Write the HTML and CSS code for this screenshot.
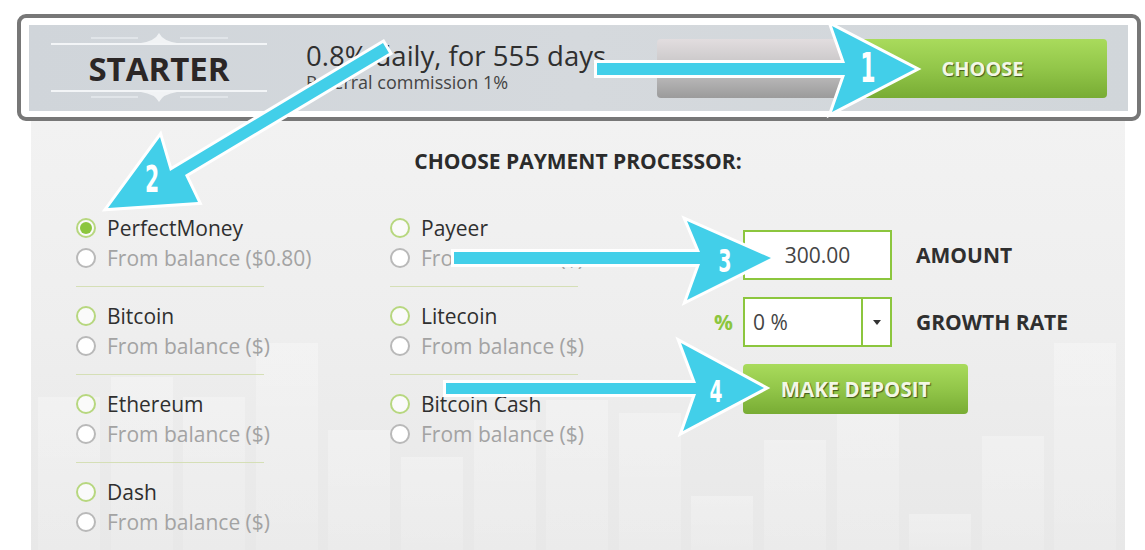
FILE: index.html
```html
<!DOCTYPE html>
<html lang="en">
<head>
<meta charset="utf-8">
<title>Starter plan deposit</title>
<link rel="stylesheet" href="styles.css">
</head>
<body>
<div class="page">
  <div class="highlight">
    <div class="plan-band">
      <div class="logo">
        <svg class="orn" width="216" height="12" viewBox="0 0 216 12">
          <line x1="40" y1="7" x2="87" y2="7" stroke="#e6eaee" stroke-width="1.5"/>
          <line x1="129" y1="7" x2="177" y2="7" stroke="#e6eaee" stroke-width="1.5"/>
          <path d="M90 12 Q104 10 108 2 Q112 10 126 12 Z" fill="#f1f3f5"/>
        </svg>
        <div class="logo-title">STARTER</div>
        <svg class="orn" width="216" height="12" viewBox="0 0 216 12">
          <line x1="40" y1="5" x2="87" y2="5" stroke="#e6eaee" stroke-width="1.5"/>
          <line x1="129" y1="5" x2="177" y2="5" stroke="#e6eaee" stroke-width="1.5"/>
          <path d="M90 0 Q104 2 108 10 Q112 2 126 0 Z" fill="#f1f3f5"/>
        </svg>
      </div>
      <div class="plan-info">
        <div class="plan-rate">0.8% daily, for 555 days</div>
        <div class="plan-ref">Referral commission 1%</div>
      </div>
      <div class="plan-actions">
        <div class="btn-gray"></div>
        <div class="btn-green btn-choose">CHOOSE</div>
      </div>
    </div>
  </div>

  <div class="panel">
    <div class="bars">
      <div class="bar" style="height:153px"></div>
      <div class="bar" style="height:173px"></div>
      <div class="bar" style="height:153px"></div>
      <div class="bar" style="height:207px"></div>
      <div class="bar" style="height:120px"></div>
      <div class="bar" style="height:93px"></div>
      <div class="bar" style="height:130px"></div>
      <div class="bar" style="height:150px"></div>
      <div class="bar" style="height:137px"></div>
      <div class="bar" style="height:54px"></div>
      <div class="bar" style="height:110px"></div>
      <div class="bar" style="height:150px"></div>
      <div class="bar" style="height:36px"></div>
      <div class="bar" style="height:114px"></div>
      <div class="bar" style="height:207px"></div>
    </div>

    <h2 class="panel-title">CHOOSE PAYMENT PROCESSOR:</h2>

    <div class="panel-body">
      <div class="proc-col">
        <div class="proc-group">
          <div class="opt"><span class="radio checked"></span><span class="opt-name">PerfectMoney</span></div>
          <div class="opt opt-bal"><span class="radio"></span><span>From balance ($0.80)</span></div>
        </div>
        <div class="proc-group">
          <div class="opt"><span class="radio"></span><span class="opt-name">Bitcoin</span></div>
          <div class="opt opt-bal"><span class="radio"></span><span>From balance ($)</span></div>
        </div>
        <div class="proc-group">
          <div class="opt"><span class="radio"></span><span class="opt-name">Ethereum</span></div>
          <div class="opt opt-bal"><span class="radio"></span><span>From balance ($)</span></div>
        </div>
        <div class="proc-group">
          <div class="opt"><span class="radio"></span><span class="opt-name">Dash</span></div>
          <div class="opt opt-bal"><span class="radio"></span><span>From balance ($)</span></div>
        </div>
      </div>

      <div class="proc-col proc-col-2">
        <div class="proc-group">
          <div class="opt"><span class="radio"></span><span class="opt-name">Payeer</span></div>
          <div class="opt opt-bal"><span class="radio"></span><span>From balance ($)</span></div>
        </div>
        <div class="proc-group">
          <div class="opt"><span class="radio"></span><span class="opt-name">Litecoin</span></div>
          <div class="opt opt-bal"><span class="radio"></span><span>From balance ($)</span></div>
        </div>
        <div class="proc-group">
          <div class="opt"><span class="radio"></span><span class="opt-name">Bitcoin Cash</span></div>
          <div class="opt opt-bal"><span class="radio"></span><span>From balance ($)</span></div>
        </div>
      </div>

      <div class="deposit-form">
        <div class="pct"></div>
        <div class="field field-amount">300.00</div>
        <div class="field-label">AMOUNT</div>

        <div class="pct">%</div>
        <div class="field field-select">
          <span class="select-value">0 %</span>
          <span class="select-caret"><svg width="8" height="5" viewBox="0 0 8 5"><path d="M0 0H8L4 5Z" fill="#333"/></svg></span>
        </div>
        <div class="field-label">GROWTH RATE</div>

        <div class="btn-green btn-deposit">MAKE DEPOSIT</div>
      </div>
    </div>
  </div>

  <svg class="annotations" width="1145" height="550" viewBox="0 0 1145 550">
    <g fill="#42cfe9" stroke="#ffffff" stroke-width="6" stroke-linejoin="miter" paint-order="stroke">
      <polygon points="597,63 845,63 832,26 915,69 832,112 845,75 597,75"/>
      <polygon points="383,43 170,171 160,137 108,208 198,202 185,175 389,53"/>
      <polygon points="454,252 700,252 687,221 771,258 687,300 700,264 454,264"/>
      <polygon points="446,383 696,383 681,343 764,388 683,431 696,394 446,394"/>
    </g>
    <g class="arrow-num" fill="#ffffff">
      <text x="868" y="82" transform="translate(868 0) scale(0.55 1) translate(-868 0)" font-size="40">1</text>
      <text x="152" y="192" transform="translate(152 0) scale(0.55 1) translate(-152 0)" font-size="37">2</text>
      <text x="725" y="272" transform="translate(725 0) scale(0.6 1) translate(-725 0)" font-size="32">3</text>
      <text x="716" y="402" transform="translate(716 0) scale(0.6 1) translate(-716 0)" font-size="31">4</text>
    </g>
  </svg>
</div>
</body>
</html>
```

FILE: styles.css
```css
* {
  box-sizing: border-box;
}

html, body {
  margin: 0;
  padding: 0;
  background: #ffffff;
  overflow: hidden;
}

body {
  font-family: "Open Sans", "Liberation Sans", sans-serif;
  color: #333333;
}

.page {
  position: relative;
  width: 1145px;
  height: 550px;
  overflow: hidden;
}

/* Plan header with its highlight frame */
.highlight {
  margin: 14px 0 0 17px;
  width: 1124px;
  border: 4px solid #777777;
  border-radius: 9px;
  padding: 7px 9px 6px 8px;
  background: #ffffff;
}

.plan-band {
  display: flex;
  align-items: center;
  height: 86px;
  padding: 0 21px 0 22px;
  background: linear-gradient(90deg, #d0d5da 0%, #d5d9dd 50%, #d1d6da 100%);
}

.logo {
  align-self: flex-start;
  margin-top: 6px;
  width: 216px;
  display: flex;
  flex-direction: column;
}

.orn {
  display: block;
}

.logo-title {
  border-top: 2px solid #f3f5f7;
  border-bottom: 2px solid #f3f5f7;
  padding-top: 2px;
  height: 49px;
  line-height: 43px;
  text-align: center;
  font-size: 33px;
  font-weight: 700;
  color: #2b2626;
}

.plan-info {
  flex: 1;
  align-self: flex-start;
  margin-top: 17px;
  padding-left: 39px;
}

.plan-rate {
  font-size: 27.5px;
  line-height: 28px;
  color: #2f2f2f;
}

.plan-ref {
  margin-top: 1px;
  font-size: 18px;
  line-height: 22px;
  color: #444444;
}

.plan-actions {
  display: flex;
  height: 59px;
}

.btn-gray {
  width: 201px;
  border-radius: 4px 0 0 4px;
  background: linear-gradient(#e2dddf 0%, #c8c6c7 45%, #9b9b9b 100%);
}

.btn-green {
  display: flex;
  align-items: center;
  justify-content: center;
  border-radius: 4px;
  background: linear-gradient(#a9db5c 0%, #92c649 50%, #78ac34 100%);
  color: #f3f7e6;
  font-weight: 700;
  text-shadow: 1px 1px 1px rgba(40, 55, 15, 0.75);
}

.btn-choose {
  width: 249px;
  border-radius: 0 4px 4px 0;
  font-size: 20px;
}

/* Payment panel */
.panel {
  position: relative;
  margin-left: 31px;
  width: 1094px;
  height: 429px;
  padding-top: 25px;
  background: linear-gradient(#f2f2f2 0%, #eeeeee 50%, #e8e8e8 100%);
  overflow: hidden;
}

.bars {
  position: absolute;
  left: 7px;
  bottom: 0;
  display: flex;
  align-items: flex-end;
  gap: 10.6px;
}

.bar {
  width: 62px;
  background: linear-gradient(rgba(255, 255, 255, 0.28), rgba(255, 255, 255, 0.14));
}

.panel-title {
  position: relative;
  margin: 0;
  font-size: 21px;
  line-height: 30px;
  font-weight: 700;
  text-align: center;
  color: #2b2b2b;
}

.panel-body {
  position: relative;
  display: flex;
  margin-top: 37px;
  padding-left: 45px;
}

.proc-col {
  width: 314px;
}

.proc-col-2 {
  width: 324px;
}

.proc-group {
  width: 188px;
}

.proc-group + .proc-group {
  margin-top: 13px;
  padding-top: 14px;
  border-top: 1px solid #d5dfb6;
}

.opt {
  display: flex;
  align-items: center;
  gap: 11px;
  height: 30px;
  font-size: 21px;
  white-space: nowrap;
  color: #2f2f2f;
}

.opt-bal {
  color: #a3a3a3;
}

.radio {
  flex: none;
  width: 20px;
  height: 20px;
  border-radius: 50%;
  border: 2px solid #b7d77f;
  background: #fafafa;
  display: flex;
  align-items: center;
  justify-content: center;
}

.opt-bal .radio {
  border-color: #b9b9b9;
  background: #ffffff;
}

.radio.checked::after {
  content: "";
  width: 12px;
  height: 12px;
  border-radius: 50%;
  background: #8cc63e;
}

/* Deposit form */
.deposit-form {
  display: grid;
  grid-template-columns: 29px 149px auto;
  grid-auto-rows: 50px;
  row-gap: 17px;
  margin-top: 17px;
  align-items: center;
}

.pct {
  font-size: 21px;
  font-weight: 700;
  color: #8cc63e;
  align-self: center;
}

.field {
  height: 50px;
  border: 2px solid #8cc63e;
  background: #ffffff;
  font-size: 21px;
  color: #444444;
}

.field-amount {
  display: flex;
  align-items: center;
  justify-content: center;
}

.field-select {
  display: flex;
  align-items: stretch;
}

.select-value {
  flex: 1;
  display: flex;
  align-items: center;
  padding-left: 8px;
}

.select-caret {
  width: 29px;
  border-left: 2px solid #8cc63e;
  display: flex;
  align-items: center;
  justify-content: center;
}

.select-caret svg {
  display: block;
}

.field-label {
  padding-left: 24px;
  font-size: 21px;
  font-weight: 700;
  color: #2f2f2f;
  white-space: nowrap;
}

.btn-deposit {
  grid-column: 2 / 4;
  width: 225px;
  height: 50px;
  margin-top: -1px;
  font-size: 20.5px;
}

/* Annotation arrows over the screenshot */
.annotations {
  position: absolute;
  left: 0;
  top: 0;
  pointer-events: none;
}

.arrow-num {
  font-family: "DejaVu Sans", sans-serif;
  font-weight: 700;
  text-anchor: middle;
}
```
